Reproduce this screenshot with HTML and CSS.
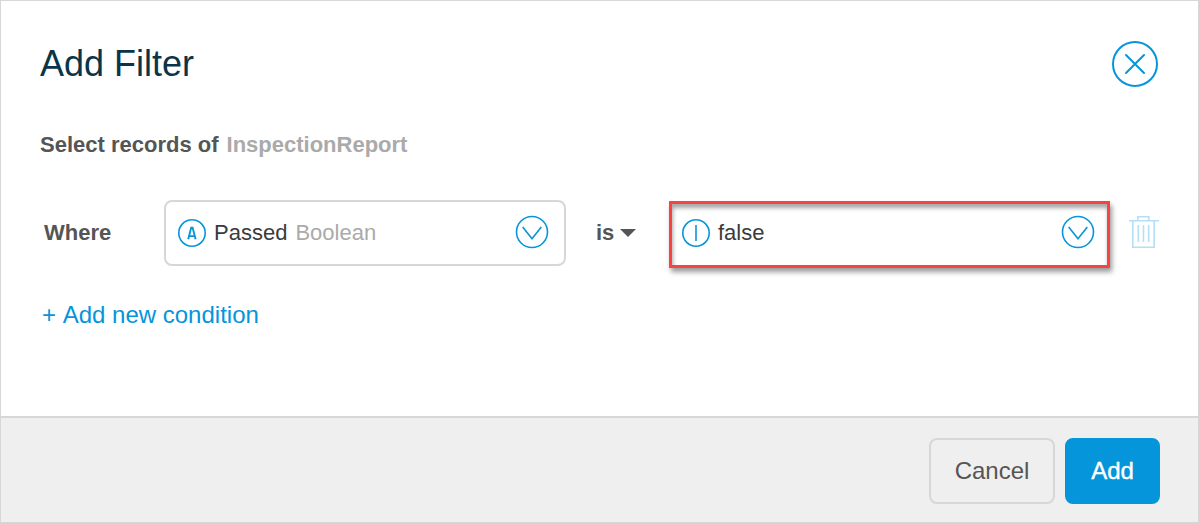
FILE: index.html
```html
<!DOCTYPE html>
<html lang="en">
<head>
<meta charset="utf-8">
<title>Add Filter</title>
<link rel="stylesheet" href="styles.css">
</head>
<body>
<main class="dialog">
  <section class="content">
    <header class="header">
      <h1 class="title">Add Filter</h1>
      <button class="icon-button" aria-label="Close">
        <svg class="icon" width="46" height="46" viewBox="0 0 46 46"><circle cx="23" cy="23" r="22"/><path d="M14 14l18 18M32 14L14 32"/></svg>
      </button>
    </header>
    <p class="source"><span>Select records of</span><span class="entity">InspectionReport</span></p>
    <div class="condition">
      <span class="where">Where</span>
      <div class="select attribute">
        <svg class="icon thin" width="28" height="28" viewBox="0 0 28 28"><circle cx="14" cy="14" r="13.2"/><path class="letter" d="M10.2 20.2L13.2 8.6h1.4L17.6 20.2M11.2 17.1h5.4"/></svg>
        <span class="value">Passed</span><span class="type">Boolean</span>
        <svg class="icon thin chevron" width="34" height="34" viewBox="0 0 34 34"><circle cx="17" cy="17" r="15.5"/><path d="M7.7 12l9.3 11.8L26.3 12"/></svg>
      </div>
      <button class="operator">is <span class="caret"></span></button>
      <div class="select operand">
        <svg class="icon thin" width="28" height="28" viewBox="0 0 28 28"><circle cx="14" cy="14" r="13.2"/><path d="M14 6v16"/></svg>
        <span class="value">false</span>
        <svg class="icon thin chevron" width="34" height="34" viewBox="0 0 34 34"><circle cx="17" cy="17" r="15.5"/><path d="M7.7 12l9.3 11.8L26.3 12"/></svg>
      </div>
      <button class="icon-button remove" aria-label="Remove condition">
        <svg class="trash" width="32" height="34" viewBox="0 0 32 34"><path d="M1 5.7h30M9.8 5V1.7h11V5M4.8 6v26.2h21.4V6M10.3 10v17M15.5 10v17M20.7 10v17"/></svg>
      </button>
    </div>
    <a class="add-condition">+ Add new condition</a>
  </section>
  <footer class="footer">
    <button class="button">Cancel</button>
    <button class="button primary">Add</button>
  </footer>
</main>
</body>
</html>
```
FILE: styles.css
```css
* { box-sizing: border-box; }
body {
  margin: 0;
  font-family: "Liberation Sans", Arial, sans-serif;
  font-size: 22px;
  font-kerning: none;
  color: #555;
}
button {
  font: inherit;
  font-kerning: none;
  color: inherit;
  background: none;
  border: 0;
  padding: 0;
}
svg { display: block; flex: none; }
.dialog {
  display: flex;
  flex-direction: column;
  width: 1199px;
  height: 523px;
  border: 1px solid #d7d7d7;
  background: #fff;
}
.content { flex: 1; padding: 40px 38px 0 39px; }
.header {
  display: flex;
  justify-content: space-between;
  align-items: center;
  height: 46px;
  padding-right: 2px;
}
.title {
  margin: 0;
  font-size: 36px;
  font-weight: 400;
  line-height: 46px;
  color: #0a3549;
}
.icon { fill: none; stroke: #0595db; stroke-width: 2; stroke-linecap: round; }
.thin { stroke-width: 1.6; stroke-linecap: butt; }
.letter { stroke-width: 1.9; }
.source {
  display: flex;
  gap: 8px;
  margin: 45px 0 0;
  font-weight: 700;
  line-height: 26px;
}
.entity { color: #aaa; }
.condition {
  display: flex;
  align-items: center;
  height: 66px;
  margin-top: 42px;
}
.where { width: 124px; padding-left: 4px; font-weight: 700; line-height: 26px; }
.select { display: flex; align-items: center; }
.attribute {
  width: 402px;
  height: 66px;
  padding: 0 15px 0 12px;
  border: 2px solid #d7d7d7;
  border-radius: 8px;
}
.value { margin-left: 8px; color: #3b3b3b; }
.type { margin-left: 8px; color: #aaa; }
.chevron { margin: -2px 0 0 auto; }
.operator {
  display: flex;
  align-items: center;
  gap: 6px;
  width: 73px;
  margin-left: 30px;
  font-weight: 700;
}
.caret { border: 8px solid transparent; border-top-color: #555; border-bottom: 0; }
.operand {
  width: 441px;
  height: 67px;
  margin-top: 2px;
  padding: 0 12px 2px 10px;
  border: 3px solid #fb4242;
  box-shadow: 2px 4px 5px rgba(0,0,0,.4), inset 1px 4px 4px rgba(0,0,0,.35);
}
.remove { margin-left: 18px; }
.trash { margin-top: -2px; fill: none; stroke: #b4dff4; stroke-width: 1.6; }
.add-condition {
  display: block;
  margin: 35px 0 0 2px;
  font-size: 24px;
  line-height: 28px;
  color: #0595db;
}
.footer {
  display: flex;
  justify-content: flex-end;
  gap: 10px;
  height: 106px;
  padding: 20px 38px 0;
  border-top: 2px solid #d7d7d7;
  background: #efefef;
}
.button {
  width: 126px;
  height: 66px;
  border: 2px solid #d7d7d7;
  border-radius: 8px;
  font-size: 24px;
}
.primary {
  width: 95px;
  border-color: #0595db;
  background: #0595db;
  color: #fff;
  -webkit-text-stroke: .4px #fff;
}
```
